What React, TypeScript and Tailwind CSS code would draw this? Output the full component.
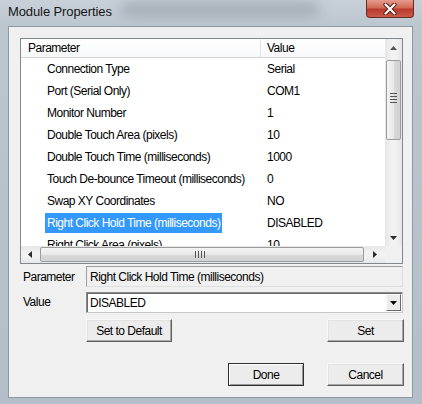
import React from "react";

const rows: [string, string][] = [
  ["Connection Type", "Serial"],
  ["Port (Serial Only)", "COM1"],
  ["Monitor Number", "1"],
  ["Double Touch Area (pixels)", "10"],
  ["Double Touch Time (milliseconds)", "1000"],
  ["Touch De-bounce Timeout (milliseconds)", "0"],
  ["Swap XY Coordinates", "NO"],
  ["Right Click Hold Time (milliseconds)", "DISABLED"],
  ["Right Click Area (pixels)", "10"],
];

function Tri({ dir, color = "#2b2b2b" }: { dir: "up" | "down" | "left" | "right"; color?: string }) {
  const pts: Record<string, string> = {
    up: "0,4 7,4 3.5,0",
    down: "0,0 7,0 3.5,4",
    left: "4,0 4,7 0,3.5",
    right: "0,0 0,7 4,3.5",
  };
  const horiz = dir === "up" || dir === "down";
  return (
    <svg width={horiz ? 7 : 4} height={horiz ? 4 : 7} viewBox={horiz ? "0 0 7 4" : "0 0 4 7"}>
      <polygon points={pts[dir]} fill={color} />
    </svg>
  );
}

function ClassicButton({ label, w, isDefault }: { label: string; w: string; isDefault?: boolean }) {
  return (
    <div
      className={
        "h-[23px] flex items-center justify-center bg-[#ececec] " +
        w +
        (isDefault
          ? " border border-[#2f2f2f] shadow-[inset_1px_1px_0_#ffffff,inset_-1px_-1px_0_#9a9a9a]"
          : " border border-t-[#f8f8f8] border-l-[#f8f8f8] border-r-[#5f5f5f] border-b-[#5f5f5f] shadow-[inset_-1px_-1px_0_#a8a8a8,inset_1px_1px_0_#e2e2e2]")
      }
    >
      <span className="leading-none">{label}</span>
    </div>
  );
}

export default function App() {
  return (
    <div className="relative w-[422px] h-[404px] overflow-hidden bg-[linear-gradient(180deg,#c8d0d8_0px,#bcc6cf_26px,#b4bec8_100%)] font-['Liberation_Sans',Arial,sans-serif] text-[12px] tracking-[-0.5px] text-black">
      {/* blurred glass smudge behind title */}
      <div className="absolute left-[120px] top-[2px] w-[200px] h-[14px] rounded-full bg-[#6f7982] opacity-40 blur-[7px]" />

      {/* title bar */}
      <div className="relative h-[26px] pl-[8px] flex items-center text-[13px] tracking-[-0.1px] text-[#161616] pb-[2px]">
        Module Properties
      </div>

      {/* close button */}
      <div className="absolute left-[366px] top-0 w-[48px] h-[18px] rounded-b-[4px] border border-t-0 border-[#6a2a22] bg-[linear-gradient(180deg,#e59c8e_0%,#d26a56_45%,#b93b2b_55%,#c85a45_100%)] flex items-center justify-center">
        <svg width="14" height="12" viewBox="0 0 14 12">
          <path d="M2.5 1.5 L11.5 10.5 M11.5 1.5 L2.5 10.5" stroke="#5b1d15" strokeWidth="4.2" strokeLinecap="round" />
          <path d="M2.5 1.5 L11.5 10.5 M11.5 1.5 L2.5 10.5" stroke="#ffffff" strokeWidth="2.2" strokeLinecap="round" />
        </svg>
      </div>

      {/* client area */}
      <div className="ml-[8px] mr-[9px] h-[372px] border border-[#8d98a3] bg-[#f0f0f0] pl-[11px] pt-[11px]">
        {/* list view */}
        <div className="w-[383px] h-[226px] border border-[#828790] bg-white flex">
          <div className="w-[364px] flex flex-col">
            {/* header */}
            <div className="h-[19px] flex border-b border-[#d5d5d5] bg-[linear-gradient(180deg,#ffffff,#f7f8fa)]">
              <div className="w-[240px] border-r border-[#e3e4e6] pl-[7px] flex items-center">Parameter</div>
              <div className="flex-1 pl-[6px] flex items-center">Value</div>
            </div>
            {/* body */}
            <div className="h-[188px] overflow-hidden">
              {rows.map(([p, v], i) => {
                const sel = i === 7;
                return (
                  <div key={p} className="h-[22px] flex items-center shrink-0">
                    <div className="w-[240px] pl-[24px] overflow-hidden whitespace-nowrap">
                      <span
                        className={
                          "inline-flex items-center h-[20px] px-[2px] " +
                          (sel ? "bg-[#3399ff] text-white" : "")
                        }
                      >
                        {p}
                      </span>
                    </div>
                    <div className="flex-1 pl-[6px] whitespace-nowrap">{v}</div>
                  </div>
                );
              })}
            </div>
            {/* horizontal scrollbar */}
            <div className="h-[17px] flex items-center bg-[linear-gradient(180deg,#e6e6e6,#f2f2f2_40%,#f2f2f2_60%,#e6e6e6)]">
              <div className="w-[17px] h-[17px] flex items-center justify-center">
                <Tri dir="left" />
              </div>
              <div className="ml-[2px] w-[324px] h-[15px] rounded-[2px] border border-[#9b9b9b] bg-[linear-gradient(180deg,#f4f4f4,#e8e8e8_50%,#d9d9d9_51%,#d2d2d2)] flex items-center justify-center">
                <div className="ml-[-4px] flex gap-[2px]">
                  <div className="w-[1px] h-[7px] bg-[#555]" />
                  <div className="w-[1px] h-[7px] bg-[#555]" />
                  <div className="w-[1px] h-[7px] bg-[#555]" />
                  <div className="w-[1px] h-[7px] bg-[#555]" />
                </div>
              </div>
              <div className="flex-1 h-[17px] flex items-center justify-center">
                <Tri dir="right" />
              </div>
            </div>
          </div>
          {/* vertical scrollbar */}
          <div className="w-[17px] flex flex-col">
            <div className="h-[207px] flex flex-col items-center bg-[linear-gradient(90deg,#e6e6e6,#f2f2f2_40%,#f2f2f2_60%,#e6e6e6)]">
              <div className="h-[17px] w-[17px] flex items-center justify-center">
                <Tri dir="up" color="#555" />
              </div>
              <div className="mt-[4px] w-[15px] h-[80px] rounded-[2px] border border-[#9b9b9b] bg-[linear-gradient(90deg,#f4f4f4,#e8e8e8_50%,#d9d9d9_51%,#d2d2d2)] flex items-center justify-center">
                <div className="flex flex-col gap-[2px] mt-[-4px]">
                  <div className="w-[7px] h-[1px] bg-[#555]" />
                  <div className="w-[7px] h-[1px] bg-[#555]" />
                  <div className="w-[7px] h-[1px] bg-[#555]" />
                  <div className="w-[7px] h-[1px] bg-[#555]" />
                </div>
              </div>
              <div className="flex-1" />
              <div className="h-[17px] w-[17px] flex items-center justify-center">
                <Tri dir="down" />
              </div>
            </div>
            <div className="h-[17px] bg-[#f0f0f0]" />
          </div>
        </div>

        {/* parameter row */}
        <div className="mt-[2px] flex items-center h-[21px]">
          <div className="w-[66px] pl-[3px]">Parameter</div>
          <div className="w-[317px] h-[21px] border border-t-[#9d9d9d] border-l-[#9d9d9d] border-r-[#dedede] border-b-[#dedede] bg-[#f0f0f0] flex items-center pl-[3px]">
            Right Click Hold Time (milliseconds)
          </div>
        </div>

        {/* value row */}
        <div className="mt-[5px] flex items-center h-[21px]">
          <div className="w-[66px] pl-[3px] mt-[-2px]">Value</div>
          <div className="w-[317px] h-[21px] border border-[#8a8a8a] border-b-[#c8c8c8] border-r-[#c8c8c8] bg-white flex items-center pl-[3px] shadow-[inset_1px_1px_0_#6a6a6a]">
            <span className="flex-1">DISABLED</span>
            <div className="w-[15px] h-[17px] mr-[1px] border border-t-[#f8f8f8] border-l-[#f8f8f8] border-r-[#6a6a6a] border-b-[#6a6a6a] bg-[#ececec] flex items-center justify-center">
              <Tri dir="down" color="#000" />
            </div>
          </div>
        </div>

        {/* set buttons */}
        <div className="mt-[6px] w-[384px] flex">
          <div className="ml-[66px]">
            <ClassicButton label="Set to Default" w="w-[86px]" />
          </div>
          <div className="ml-auto">
            <ClassicButton label="Set" w="w-[77px]" />
          </div>
        </div>

        {/* done / cancel */}
        <div className="mt-[21px] w-[384px] flex justify-end gap-[23px]">
          <ClassicButton label="Done" w="w-[76px]" isDefault />
          <ClassicButton label="Cancel" w="w-[77px]" />
        </div>
      </div>
    </div>
  );
}
